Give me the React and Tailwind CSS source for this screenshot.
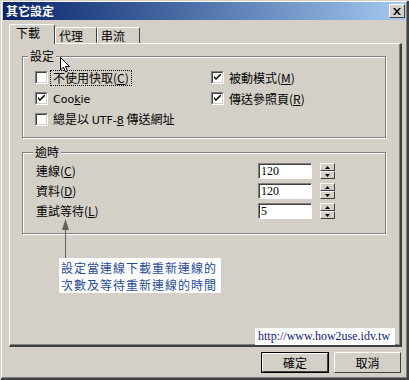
import React from 'react';

const font = { fontFamily: '"Noto Sans CJK TC", "DejaVu Sans", sans-serif' };

const Check = ({ checked }) => (
  <span className="flex h-[13px] w-[13px] shrink-0 items-center justify-center border-t border-l border-t-[#808080] border-l-[#808080] border-r border-b border-r-white border-b-white">
    <span className="flex h-[11px] w-[11px] items-center justify-center border-t border-l border-t-[#404040] border-l-[#404040] border-r border-b border-r-[#d4d0c8] border-b-[#d4d0c8] bg-white">
      {checked && (
        <svg width="7" height="7" viewBox="0 0 7 7">
          <path d="M0 2 L0 4 L2 6 L7 1 L7 -1 L2 4 Z" fill="#000" />
        </svg>
      )}
    </span>
  </span>
);

const CheckRow = ({ checked, children, focus }) => (
  <div className="flex h-[13px] items-center">
    <Check checked={checked} />
    <span className={`ml-[3px] px-[2px] text-[12px] leading-[14px] text-black ${focus ? 'outline outline-1 outline-dotted outline-black' : ''}`}>
      {children}
    </span>
  </div>
);

const Group = ({ label, labelLeft, className, children }) => (
  <div className={`relative border border-[#808080] shadow-[inset_1px_1px_0_#fff,1px_1px_0_#fff] ${className}`}>
    <span className={`absolute top-[-8px] bg-[#d4d0c8] px-[2px] text-[12px] leading-[14px] ${labelLeft}`}>{label}</span>
    {children}
  </div>
);

const Spin = () => (
  <div className="flex h-[16px] w-[15px] flex-col">
    {['M0 3 L5 3 L2.5 0 Z', 'M0 0 L5 0 L2.5 3 Z'].map((d, i) => (
      <div key={i} className="flex h-[8px] items-center justify-center border-t border-l border-t-white border-l-white border-r border-b border-r-[#404040] border-b-[#404040] bg-[#d4d0c8]">
        <svg width="5" height="3" viewBox="0 0 5 3"><path d={d} fill="#000" /></svg>
      </div>
    ))}
  </div>
);

const Field = ({ value }) => (
  <div className="flex items-center gap-[8px]">
    <div className="h-[16px] w-[54px] border-t border-l border-t-[#808080] border-l-[#808080] border-r border-b border-r-white border-b-white">
      <div className="h-full w-full border-t border-l border-t-[#404040] border-l-[#404040] bg-white pl-[1px] text-[12px] leading-[13px]" style={{ fontFamily: '"Liberation Serif", serif' }}>
        {value}
      </div>
    </div>
    <Spin />
  </div>
);

const Btn = ({ children, def }) => (
  <div className={`flex h-[21px] items-center justify-center bg-[#d4d0c8] text-[12px] ${def ? 'w-[68px] border border-black' : 'w-[67px]'}`}>
    <div className="flex h-full w-full items-center justify-center border-t border-l border-t-white border-l-white border-r border-b border-r-[#404040] border-b-[#404040]">
      {children}
    </div>
  </div>
);

export default function App() {
  return (
    <div className="relative h-[380px] w-[409px] overflow-hidden border-t border-l border-t-[#d4d0c8] border-l-[#d4d0c8] bg-[#d4d0c8] text-black" style={font}>
      <div className="absolute inset-0 border-r-2 border-b-2 border-r-[#404040] border-b-[#404040] shadow-[inset_1px_1px_0_#fff,inset_-1px_-1px_0_#808080] pointer-events-none" />
      {/* title bar */}
      <div className="mx-[2px] mt-[1px] flex h-[18px] items-center justify-between bg-gradient-to-r from-[#0a246a] to-[#a6caf0] pl-[3px] pr-[2px]">
        <span className="text-[12px] font-bold leading-[14px] text-white">其它設定</span>
        <div className="flex h-[14px] w-[16px] items-center justify-center border-t border-l border-t-white border-l-white border-r border-b border-r-[#404040] border-b-[#404040] bg-[#d4d0c8]">
          <svg width="8" height="7" viewBox="0 0 8 7">
            <path d="M0 0 L2 0 L4 2.5 L6 0 L8 0 L5 3.5 L8 7 L6 7 L4 4.5 L2 7 L0 7 L3 3.5 Z" fill="#000" />
          </svg>
        </div>
      </div>

      {/* tabs */}
      <div className="ml-[8px] mt-[5px] flex h-[18px] items-end">
        <div className="relative z-10 mb-[-1px] flex h-[20px] w-[46px] items-start rounded-t-[2px] border-t border-l border-t-white border-l-white border-r border-r-[#404040] bg-[#d4d0c8] pl-[6px] pt-[1px] text-[12px] leading-[14px]">下載</div>
        <div className="flex h-[16px] w-[42px] items-start rounded-t-[2px] border-t border-l border-t-white border-l-white border-r border-r-[#404040] pl-[3px] pt-[1px] text-[12px] leading-[14px]">代理</div>
        <div className="flex h-[16px] w-[43px] items-start rounded-t-[2px] border-t border-l border-t-white border-l-white border-r border-r-[#404040] pl-[3px] pt-[1px] text-[12px] leading-[14px]">串流</div>
      </div>

      {/* panel */}
      <div className="relative ml-[8px] h-[304px] w-[393px] border-t border-l border-t-white border-l-white border-r-2 border-b-2 border-r-[#404040] border-b-[#404040] shadow-[inset_-1px_-1px_0_#808080]">
        <Group label="設定" labelLeft="left-[5px]" className="ml-[12px] mt-[12px] h-[82px] w-[364px]">
          <div className="flex pl-[12px] pt-[14px]">
            <div className="flex w-[176px] flex-col gap-[8px]">
              <CheckRow focus>不使用快取(<u>C</u>)</CheckRow>
              <CheckRow checked><span style={{ fontFamily: '"DejaVu Sans", sans-serif', fontSize: 11 }}>Coo<u>k</u>ie</span></CheckRow>
              <CheckRow>總是以 <span style={{ fontFamily: '"DejaVu Sans", sans-serif', fontSize: 11 }}>UTF-<u>8</u></span> 傳送網址</CheckRow>
            </div>
            <div className="flex flex-col gap-[8px]">
              <CheckRow checked>被動模式(<u>M</u>)</CheckRow>
              <CheckRow checked>傳送參照頁(<u>R</u>)</CheckRow>
            </div>
          </div>
        </Group>

        <Group label="逾時" labelLeft="left-[10px]" className="ml-[12px] mt-[14px] h-[82px] w-[364px]">
          <div className="flex flex-col gap-[4px] pl-[13px] pr-[50px] pt-[10px]">
            {[['連線', 'C', '120'], ['資料', 'D', '120'], ['重試等待', 'L', '5']].map(([t, k, v]) => (
              <div key={t} className="flex items-center justify-between">
                <span className="text-[12px] leading-[14px]">{t}(<u>{k}</u>)</span>
                <Field value={v} />
              </div>
            ))}
          </div>
        </Group>

        {/* annotation */}
        <div className="absolute left-[52px] top-[175px] flex flex-col items-center">
          <svg width="7" height="11" viewBox="0 0 7 11"><path d="M3.5 0 L7 11 L0 11 Z" fill="#606060" /></svg>
          <div className="h-[28px] w-[1px] bg-[#606060]" />
        </div>
        <div className="absolute left-[49px] top-[214px] flex h-[35px] w-[162px] flex-col bg-white px-[2px] pt-[1px] text-[12px] leading-[17px] tracking-[1px] text-[#1f4a9a]">
          <span>設定當連線下載重新連線的</span>
          <span>次數及等待重新連線的時間</span>
        </div>
        <div className="absolute left-[245px] top-[284px] h-[17px] w-[140px] bg-white pl-[3px] text-[12px] leading-[17px] text-[#12207a]" style={{ fontFamily: '"Liberation Serif", serif' }}>
          http://www.how2use.idv.tw
        </div>

        {/* cursor */}
        <svg className="absolute left-[50px] top-[13px]" width="11" height="17" viewBox="0 0 11 17">
          <path d="M0.5 0.5 L0.5 13 L3.5 10 L5.5 15 L7.5 14 L5.5 9.5 L9.5 9.5 Z" fill="#fff" stroke="#000" strokeWidth="1" />
        </svg>
      </div>

      {/* buttons */}
      <div className="mr-[8px] mt-[5px] flex justify-end gap-[5px]">
        <Btn def>確定</Btn>
        <Btn>取消</Btn>
      </div>
    </div>
  );
}
